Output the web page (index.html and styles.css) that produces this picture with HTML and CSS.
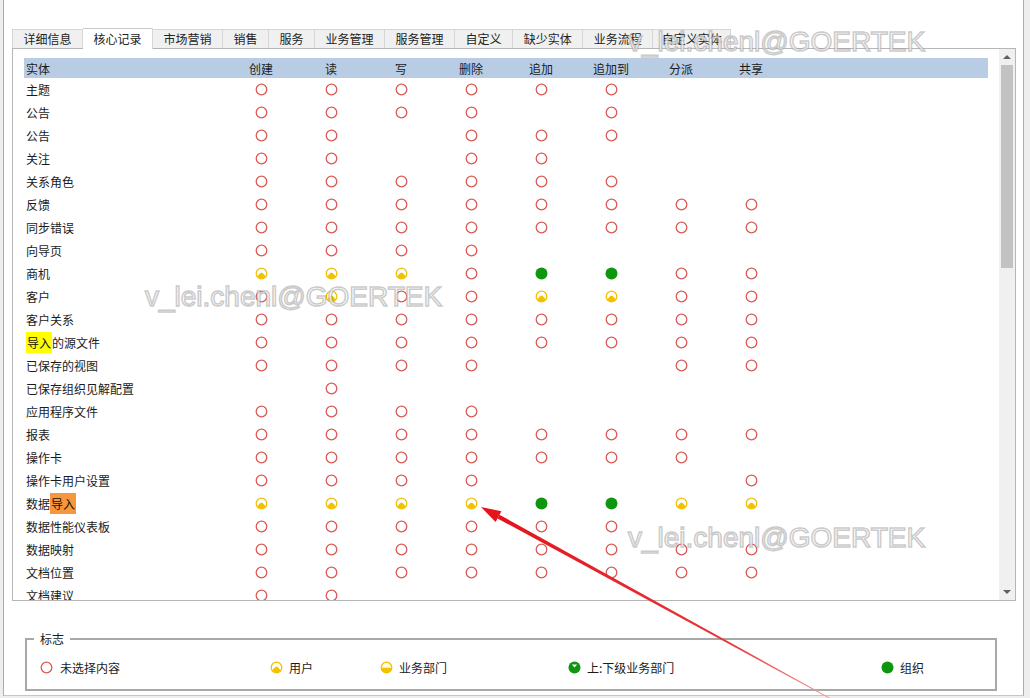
FILE: index.html
```html
<!DOCTYPE html>
<html lang="zh-CN">
<head>
<meta charset="utf-8">
<title>安全角色 - 核心记录</title>
<link rel="stylesheet" href="styles.css">
</head>
<body>
<svg class="defs" width="0" height="0" aria-hidden="true">
  <symbol id="r" viewBox="0 0 13 13"><circle cx="6.5" cy="6.5" r="5.3" fill="none" stroke="#dc5a55" stroke-width="1.3"/></symbol>
  <symbol id="y" viewBox="0 0 13 13"><circle cx="6.5" cy="6.5" r="5.3" fill="#fff" stroke="#f2c100" stroke-width="1.3"/><path d="M2.3,9.5 C3.6,8.4 4.9,5.6 6.5,5.6 C8.1,5.6 9.4,8.4 10.7,9.5 A5.3,5.3 0 0 1 2.3,9.5 Z" fill="#f2c100"/></symbol>
  <symbol id="b" viewBox="0 0 13 13"><circle cx="6.5" cy="6.5" r="5.3" fill="#fffbe0" stroke="#f2c100" stroke-width="1.3"/><path d="M1.2,6.8 L11.8,6.8 A5.3,5.3 0 0 1 1.2,6.8 Z" fill="#f2c100"/></symbol>
  <symbol id="p" viewBox="0 0 13 13"><circle cx="6.5" cy="6.5" r="6" fill="#0e960e"/><path d="M3.9,3.6 L9.1,3.6 L6.5,6.6 Z" fill="#fff"/></symbol>
  <symbol id="g" viewBox="0 0 13 13"><circle cx="6.5" cy="6.5" r="6" fill="#0e960e"/></symbol>
</svg>

<div class="window">
  <div class="tabs">
    <div class="tab">详细信息</div>
    <div class="tab active">核心记录</div>
    <div class="tab">市场营销</div>
    <div class="tab">销售</div>
    <div class="tab">服务</div>
    <div class="tab">业务管理</div>
    <div class="tab">服务管理</div>
    <div class="tab">自定义</div>
    <div class="tab">缺少实体</div>
    <div class="tab">业务流程</div>
    <div class="tab narrow">自定义实体</div>
  </div>

  <div class="panel">
    <div class="list">
      <div class="row head"><span class="name">实体</span><span class="c">创建</span><span class="c">读</span><span class="c">写</span><span class="c">删除</span><span class="c">追加</span><span class="c">追加到</span><span class="c">分派</span><span class="c">共享</span></div>

      <div class="row"><span class="name">主题</span><span class="c"><svg class="ic"><use href="#r"/></svg></span><span class="c"><svg class="ic"><use href="#r"/></svg></span><span class="c"><svg class="ic"><use href="#r"/></svg></span><span class="c"><svg class="ic"><use href="#r"/></svg></span><span class="c"><svg class="ic"><use href="#r"/></svg></span><span class="c"><svg class="ic"><use href="#r"/></svg></span><span class="c"></span><span class="c"></span></div>

      <div class="row"><span class="name">公告</span><span class="c"><svg class="ic"><use href="#r"/></svg></span><span class="c"><svg class="ic"><use href="#r"/></svg></span><span class="c"><svg class="ic"><use href="#r"/></svg></span><span class="c"><svg class="ic"><use href="#r"/></svg></span><span class="c"></span><span class="c"><svg class="ic"><use href="#r"/></svg></span><span class="c"></span><span class="c"></span></div>

      <div class="row"><span class="name">公告</span><span class="c"><svg class="ic"><use href="#r"/></svg></span><span class="c"><svg class="ic"><use href="#r"/></svg></span><span class="c"></span><span class="c"><svg class="ic"><use href="#r"/></svg></span><span class="c"><svg class="ic"><use href="#r"/></svg></span><span class="c"><svg class="ic"><use href="#r"/></svg></span><span class="c"></span><span class="c"></span></div>

      <div class="row"><span class="name">关注</span><span class="c"><svg class="ic"><use href="#r"/></svg></span><span class="c"><svg class="ic"><use href="#r"/></svg></span><span class="c"></span><span class="c"><svg class="ic"><use href="#r"/></svg></span><span class="c"><svg class="ic"><use href="#r"/></svg></span><span class="c"></span><span class="c"></span><span class="c"></span></div>

      <div class="row"><span class="name">关系角色</span><span class="c"><svg class="ic"><use href="#r"/></svg></span><span class="c"><svg class="ic"><use href="#r"/></svg></span><span class="c"><svg class="ic"><use href="#r"/></svg></span><span class="c"><svg class="ic"><use href="#r"/></svg></span><span class="c"><svg class="ic"><use href="#r"/></svg></span><span class="c"><svg class="ic"><use href="#r"/></svg></span><span class="c"></span><span class="c"></span></div>

      <div class="row"><span class="name">反馈</span><span class="c"><svg class="ic"><use href="#r"/></svg></span><span class="c"><svg class="ic"><use href="#r"/></svg></span><span class="c"><svg class="ic"><use href="#r"/></svg></span><span class="c"><svg class="ic"><use href="#r"/></svg></span><span class="c"><svg class="ic"><use href="#r"/></svg></span><span class="c"><svg class="ic"><use href="#r"/></svg></span><span class="c"><svg class="ic"><use href="#r"/></svg></span><span class="c"><svg class="ic"><use href="#r"/></svg></span></div>

      <div class="row"><span class="name">同步错误</span><span class="c"><svg class="ic"><use href="#r"/></svg></span><span class="c"><svg class="ic"><use href="#r"/></svg></span><span class="c"><svg class="ic"><use href="#r"/></svg></span><span class="c"><svg class="ic"><use href="#r"/></svg></span><span class="c"><svg class="ic"><use href="#r"/></svg></span><span class="c"><svg class="ic"><use href="#r"/></svg></span><span class="c"><svg class="ic"><use href="#r"/></svg></span><span class="c"><svg class="ic"><use href="#r"/></svg></span></div>

      <div class="row"><span class="name">向导页</span><span class="c"><svg class="ic"><use href="#r"/></svg></span><span class="c"><svg class="ic"><use href="#r"/></svg></span><span class="c"><svg class="ic"><use href="#r"/></svg></span><span class="c"><svg class="ic"><use href="#r"/></svg></span><span class="c"></span><span class="c"></span><span class="c"></span><span class="c"></span></div>

      <div class="row"><span class="name">商机</span><span class="c"><svg class="ic"><use href="#y"/></svg></span><span class="c"><svg class="ic"><use href="#y"/></svg></span><span class="c"><svg class="ic"><use href="#y"/></svg></span><span class="c"><svg class="ic"><use href="#r"/></svg></span><span class="c"><svg class="ic"><use href="#g"/></svg></span><span class="c"><svg class="ic"><use href="#g"/></svg></span><span class="c"><svg class="ic"><use href="#r"/></svg></span><span class="c"><svg class="ic"><use href="#r"/></svg></span></div>

      <div class="row"><span class="name">客户</span><span class="c"><svg class="ic"><use href="#r"/></svg></span><span class="c"><svg class="ic"><use href="#y"/></svg></span><span class="c"><svg class="ic"><use href="#r"/></svg></span><span class="c"><svg class="ic"><use href="#r"/></svg></span><span class="c"><svg class="ic"><use href="#y"/></svg></span><span class="c"><svg class="ic"><use href="#y"/></svg></span><span class="c"><svg class="ic"><use href="#r"/></svg></span><span class="c"><svg class="ic"><use href="#r"/></svg></span></div>

      <div class="row"><span class="name">客户关系</span><span class="c"><svg class="ic"><use href="#r"/></svg></span><span class="c"><svg class="ic"><use href="#r"/></svg></span><span class="c"><svg class="ic"><use href="#r"/></svg></span><span class="c"><svg class="ic"><use href="#r"/></svg></span><span class="c"><svg class="ic"><use href="#r"/></svg></span><span class="c"><svg class="ic"><use href="#r"/></svg></span><span class="c"><svg class="ic"><use href="#r"/></svg></span><span class="c"><svg class="ic"><use href="#r"/></svg></span></div>

      <div class="row"><span class="name"><mark class="hl">导入</mark>的源文件</span><span class="c"><svg class="ic"><use href="#r"/></svg></span><span class="c"><svg class="ic"><use href="#r"/></svg></span><span class="c"><svg class="ic"><use href="#r"/></svg></span><span class="c"><svg class="ic"><use href="#r"/></svg></span><span class="c"><svg class="ic"><use href="#r"/></svg></span><span class="c"><svg class="ic"><use href="#r"/></svg></span><span class="c"><svg class="ic"><use href="#r"/></svg></span><span class="c"><svg class="ic"><use href="#r"/></svg></span></div>

      <div class="row"><span class="name">已保存的视图</span><span class="c"><svg class="ic"><use href="#r"/></svg></span><span class="c"><svg class="ic"><use href="#r"/></svg></span><span class="c"><svg class="ic"><use href="#r"/></svg></span><span class="c"><svg class="ic"><use href="#r"/></svg></span><span class="c"></span><span class="c"></span><span class="c"><svg class="ic"><use href="#r"/></svg></span><span class="c"><svg class="ic"><use href="#r"/></svg></span></div>

      <div class="row"><span class="name">已保存组织见解配置</span><span class="c"></span><span class="c"><svg class="ic"><use href="#r"/></svg></span><span class="c"></span><span class="c"></span><span class="c"></span><span class="c"></span><span class="c"></span><span class="c"></span></div>

      <div class="row"><span class="name">应用程序文件</span><span class="c"><svg class="ic"><use href="#r"/></svg></span><span class="c"><svg class="ic"><use href="#r"/></svg></span><span class="c"><svg class="ic"><use href="#r"/></svg></span><span class="c"><svg class="ic"><use href="#r"/></svg></span><span class="c"></span><span class="c"></span><span class="c"></span><span class="c"></span></div>

      <div class="row"><span class="name">报表</span><span class="c"><svg class="ic"><use href="#r"/></svg></span><span class="c"><svg class="ic"><use href="#r"/></svg></span><span class="c"><svg class="ic"><use href="#r"/></svg></span><span class="c"><svg class="ic"><use href="#r"/></svg></span><span class="c"><svg class="ic"><use href="#r"/></svg></span><span class="c"><svg class="ic"><use href="#r"/></svg></span><span class="c"><svg class="ic"><use href="#r"/></svg></span><span class="c"><svg class="ic"><use href="#r"/></svg></span></div>

      <div class="row"><span class="name">操作卡</span><span class="c"><svg class="ic"><use href="#r"/></svg></span><span class="c"><svg class="ic"><use href="#r"/></svg></span><span class="c"><svg class="ic"><use href="#r"/></svg></span><span class="c"><svg class="ic"><use href="#r"/></svg></span><span class="c"><svg class="ic"><use href="#r"/></svg></span><span class="c"><svg class="ic"><use href="#r"/></svg></span><span class="c"><svg class="ic"><use href="#r"/></svg></span><span class="c"></span></div>

      <div class="row"><span class="name">操作卡用户设置</span><span class="c"><svg class="ic"><use href="#r"/></svg></span><span class="c"><svg class="ic"><use href="#r"/></svg></span><span class="c"><svg class="ic"><use href="#r"/></svg></span><span class="c"><svg class="ic"><use href="#r"/></svg></span><span class="c"></span><span class="c"></span><span class="c"></span><span class="c"><svg class="ic"><use href="#r"/></svg></span></div>

      <div class="row"><span class="name">数据<mark class="hl cur">导入</mark></span><span class="c"><svg class="ic"><use href="#y"/></svg></span><span class="c"><svg class="ic"><use href="#y"/></svg></span><span class="c"><svg class="ic"><use href="#y"/></svg></span><span class="c"><svg class="ic"><use href="#y"/></svg></span><span class="c"><svg class="ic"><use href="#g"/></svg></span><span class="c"><svg class="ic"><use href="#g"/></svg></span><span class="c"><svg class="ic"><use href="#y"/></svg></span><span class="c"><svg class="ic"><use href="#y"/></svg></span></div>

      <div class="row"><span class="name">数据性能仪表板</span><span class="c"><svg class="ic"><use href="#r"/></svg></span><span class="c"><svg class="ic"><use href="#r"/></svg></span><span class="c"><svg class="ic"><use href="#r"/></svg></span><span class="c"><svg class="ic"><use href="#r"/></svg></span><span class="c"><svg class="ic"><use href="#r"/></svg></span><span class="c"><svg class="ic"><use href="#r"/></svg></span><span class="c"></span><span class="c"></span></div>

      <div class="row"><span class="name">数据映射</span><span class="c"><svg class="ic"><use href="#r"/></svg></span><span class="c"><svg class="ic"><use href="#r"/></svg></span><span class="c"><svg class="ic"><use href="#r"/></svg></span><span class="c"><svg class="ic"><use href="#r"/></svg></span><span class="c"><svg class="ic"><use href="#r"/></svg></span><span class="c"><svg class="ic"><use href="#r"/></svg></span><span class="c"><svg class="ic"><use href="#r"/></svg></span><span class="c"><svg class="ic"><use href="#r"/></svg></span></div>

      <div class="row"><span class="name">文档位置</span><span class="c"><svg class="ic"><use href="#r"/></svg></span><span class="c"><svg class="ic"><use href="#r"/></svg></span><span class="c"><svg class="ic"><use href="#r"/></svg></span><span class="c"><svg class="ic"><use href="#r"/></svg></span><span class="c"><svg class="ic"><use href="#r"/></svg></span><span class="c"><svg class="ic"><use href="#r"/></svg></span><span class="c"><svg class="ic"><use href="#r"/></svg></span><span class="c"><svg class="ic"><use href="#r"/></svg></span></div>

      <div class="row"><span class="name">文档建议</span><span class="c"><svg class="ic"><use href="#r"/></svg></span><span class="c"><svg class="ic"><use href="#r"/></svg></span><span class="c"></span><span class="c"></span><span class="c"></span><span class="c"></span><span class="c"></span><span class="c"></span></div>
    </div>

    <div class="vscroll">
      <div class="arr"><span class="tri up"></span></div>
      <div class="track"><div class="thumb"></div></div>
      <div class="arr"><span class="tri down"></span></div>
    </div>
  </div>

  <fieldset class="legendbox">
    <legend class="legend">标志</legend>
    <div class="items">
      <div class="item"><svg class="ic"><use href="#r"/></svg><span>未选择内容</span></div>
      <div class="item"><svg class="ic"><use href="#y"/></svg><span>用户</span></div>
      <div class="item"><svg class="ic"><use href="#b"/></svg><span>业务部门</span></div>
      <div class="item"><svg class="ic"><use href="#p"/></svg><span>上:下级业务部门</span></div>
      <div class="item"><svg class="ic"><use href="#g"/></svg><span>组织</span></div>
    </div>
  </fieldset>
</div>

<div class="wm wm1">v_lei.chenl@GOERTEK</div>
<div class="wm wm2">v_lei.chenl@GOERTEK</div>
<div class="wm wm3">v_lei.chenl@GOERTEK</div>

<svg class="arrow" width="1030" height="698" viewBox="0 0 1030 698" aria-hidden="true">
  <defs>
    <linearGradient id="ag" gradientUnits="userSpaceOnUse" x1="498" y1="516" x2="833" y2="700">
      <stop offset="0" stop-color="#e3141b"/>
      <stop offset="0.7" stop-color="#e8383c"/>
      <stop offset="1" stop-color="#f0a0a0"/>
    </linearGradient>
  </defs>
  <polygon points="481,507 501.4,511.3 495.6,521.9" fill="#e3141b"/>
  <polygon points="497.5,518.4 499.5,514.8 833.2,699.6 832.8,700.4" fill="url(#ag)"/>
</svg>
</body>
</html>
```

FILE: styles.css
```css
* {
  box-sizing: border-box;
}

html,
body {
  margin: 0;
  padding: 0;
}

body {
  position: relative;
  width: 1030px;
  height: 698px;
  overflow: hidden;
  background: #eeeeee;
  font-family: "Noto Sans CJK SC", "Liberation Sans", sans-serif;
  font-size: 12px;
  color: #1b1b1b;
}

.defs {
  position: absolute;
  width: 0;
  height: 0;
  overflow: hidden;
}

.window {
  margin-left: 3px;
  width: 1021px;
  height: 696px;
  background: #ffffff;
  border-left: 1px solid #ababab;
  border-right: 1px solid #ababab;
  border-bottom: 1px solid #c6c6c6;
  padding: 28px 6px 0 8px;
}

/* Tabs */
.tabs {
  display: flex;
  align-items: flex-end;
  height: 21px;
  margin-bottom: -1px;
  position: relative;
  z-index: 1;
}

.tab {
  height: 19px;
  margin-bottom: 1px;
  padding: 0 10.5px;
  line-height: 18px;
  background: #f0f0f0;
  border-top: 1px solid #d6d6d6;
  border-right: 1px solid #d6d6d6;
  white-space: nowrap;
  color: #222;
}

.tab.narrow {
  padding: 0 8.5px;
}

.tab:first-child {
  border-left: 1px solid #d6d6d6;
}

.tab.active {
  height: 21px;
  margin-bottom: 0;
  line-height: 19px;
  background: #ffffff;
  border-top-color: #c8c8c8;
}

/* Panel */
.panel {
  display: flex;
  width: 1004px;
  height: 553px;
  border: 1px solid #b6b6b6;
  background: #ffffff;
}

.list {
  width: 986px;
  padding: 9px 11px 0;
  overflow: hidden;
}

.row {
  display: flex;
  align-items: center;
  height: 23px;
  width: 964px;
}

.row.head {
  height: 20px;
  background: #b8cce4;
}

.name {
  width: 202px;
  padding-left: 2px;
  white-space: nowrap;
}

.c {
  width: 70px;
  display: flex;
  justify-content: center;
  align-items: center;
}

.ic {
  width: 13px;
  height: 13px;
  display: block;
  flex: none;
}

.hl {
  background: #ffff00;
  color: #111;
  padding: 2px 1px;
}

.hl.cur {
  background: #f7963a;
}

/* Scrollbar */
.vscroll {
  width: 16px;
  display: flex;
  flex-direction: column;
  background: #f0f0f0;
}

.arr {
  height: 16px;
  display: flex;
  align-items: center;
  justify-content: center;
}

.tri {
  width: 0;
  height: 0;
  border-left: 4px solid transparent;
  border-right: 4px solid transparent;
}

.tri.up {
  border-bottom: 4px solid #606060;
}

.tri.down {
  border-top: 4px solid #606060;
}

.track {
  flex: 1;
  padding: 0 2px;
}

.thumb {
  height: 203px;
  background: #c2c2c2;
}

/* Legend */
.legendbox {
  margin: 30px 0 0 13px;
  width: 972px;
  height: 60px;
  padding: 0 0 0 7px;
  border: 2px solid #a8a8a8;
  min-width: 0;
}

.legend {
  padding: 0 6px;
  line-height: 16px;
  color: #1b1b1b;
}

.items {
  display: grid;
  grid-template-columns: 230px 110px 188px 313px auto;
  align-items: center;
  height: 16px;
  margin-top: 12px;
  padding-left: 6px;
}

.item {
  display: flex;
  align-items: center;
  gap: 6px;
  white-space: nowrap;
}

.item:first-child {
  gap: 7px;
}

/* Watermarks (overlay) */
.wm {
  position: absolute;
  font-family: "Liberation Sans", sans-serif;
  font-size: 28px;
  line-height: 1;
  white-space: nowrap;
  color: rgba(255, 255, 255, 0.78);
  -webkit-text-stroke: 1.5px rgba(150, 150, 150, 0.5);
  pointer-events: none;
  z-index: 5;
}

.wm1 {
  left: 145px;
  top: 283px;
}

.wm2 {
  left: 628px;
  top: 524px;
}

.wm3 {
  left: 628px;
  top: 28px;
}

/* Annotation arrow (overlay) */
.arrow {
  position: absolute;
  left: 0;
  top: 0;
  pointer-events: none;
  z-index: 6;
}
```
